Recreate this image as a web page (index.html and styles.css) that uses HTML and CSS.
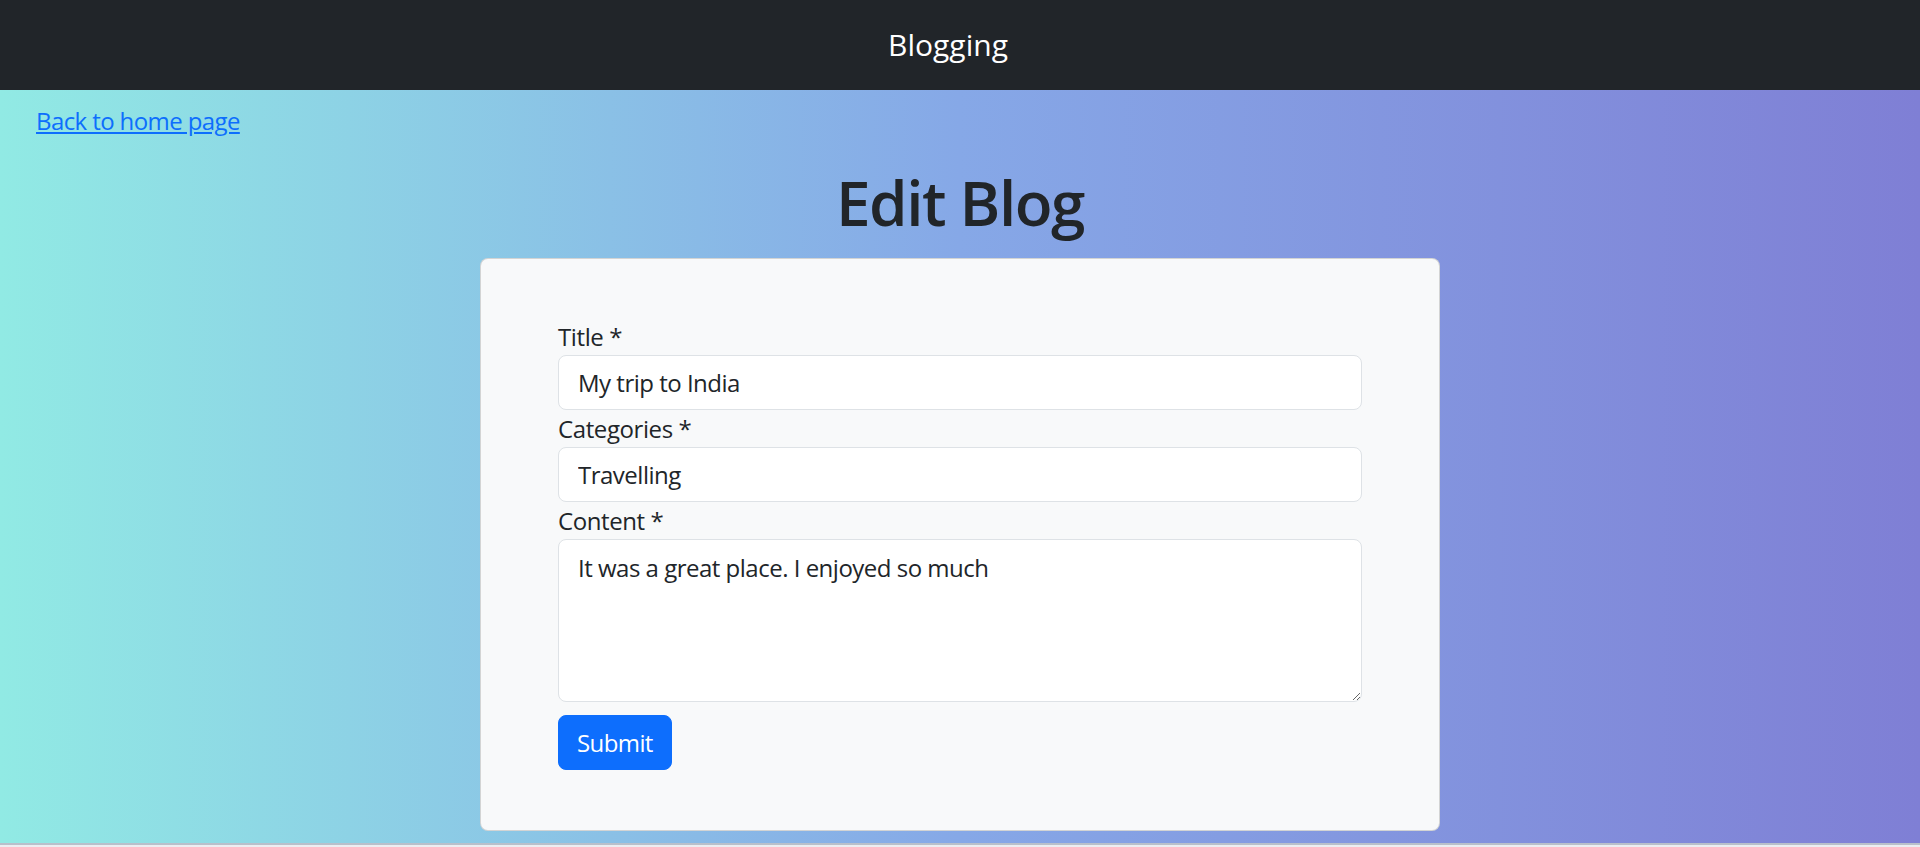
FILE: index.html
```html
<!DOCTYPE html>
<html lang="en">
<head>
<meta charset="utf-8">
<title>Edit Blog</title>
<link rel="stylesheet" href="styles.css">
</head>
<body>
<nav class="navbar">
  <span class="brand">Blogging</span>
</nav>
<main class="page">
  <a class="back-link" href="#">Back to home page</a>
  <h1 class="page-title">Edit Blog</h1>
  <div class="card">
    <form class="blog-form">
      <label class="field-label" for="title">Title *</label>
      <input class="field-input" id="title" type="text" value="My trip to India">
      <label class="field-label" for="categories">Categories *</label>
      <input class="field-input" id="categories" type="text" value="Travelling">
      <label class="field-label" for="content">Content *</label>
      <textarea class="field-textarea" id="content">It was a great place. I enjoyed so much</textarea>
      <div class="actions">
        <button class="btn-submit" type="button">Submit</button>
      </div>
    </form>
  </div>
</main>
</body>
</html>
```
FILE: styles.css
```css
* {
  box-sizing: border-box;
}

html, body {
  margin: 0;
  padding: 0;
}

body {
  font-family: "Open Sans", "Noto Sans", sans-serif;
  color: #212529;
  background: #eceef2;
  height: 847px;
  overflow: hidden;
}

.navbar {
  height: 90px;
  background: #212529;
  display: flex;
  align-items: center;
  justify-content: center;
  padding-right: 24px;
}

.brand {
  color: #ffffff;
  font-size: 30px;
  line-height: 40px;
}

.page {
  height: 755px;
  background: linear-gradient(to right, #91eae4, #86a8e7 50%, #7f7fd5);
  border-bottom: 2px solid #b9c0cb;
  display: flex;
  flex-direction: column;
  align-items: flex-start;
}

.back-link {
  margin: 12px 0 0 36px;
  font-size: 24px;
  line-height: 37px;
  letter-spacing: -0.6px;
  color: #0d6efd;
  text-decoration: underline;
}

.page-title {
  align-self: stretch;
  text-align: center;
  margin: 23px 0 16px;
  font-size: 62px;
  line-height: 80px;
  font-weight: 600;
  letter-spacing: -1.5px;
  color: #212529;
}

.card {
  align-self: center;
  width: 960px;
  background: #f8f9fa;
  border: 1px solid rgba(0, 0, 0, 0.15);
  border-radius: 8px;
  padding: 59px 77px 60px;
}

.blog-form {
  display: flex;
  flex-direction: column;
}

.field-label {
  font-size: 24px;
  line-height: 37px;
  letter-spacing: -0.4px;
  color: #212529;
}

.field-input,
.field-textarea {
  font-family: inherit;
  font-size: 24px;
  line-height: 37px;
  letter-spacing: -0.5px;
  color: #212529;
  background: #ffffff;
  border: 1px solid #dee2e6;
  border-radius: 8px;
  padding: 0 19px;
  width: 100%;
  outline: none;
}

.field-input {
  height: 55px;
}

.field-textarea {
  height: 163px;
  padding: 9px 19px;
  resize: vertical;
}

.actions {
  margin-top: 13px;
  display: flex;
}

.btn-submit {
  font-family: inherit;
  font-size: 24px;
  line-height: 37px;
  letter-spacing: -0.6px;
  height: 55px;
  padding: 0 18px;
  background: #0d6efd;
  color: #ffffff;
  border: 1px solid #0d6efd;
  border-radius: 8px;
  cursor: pointer;
}
```
